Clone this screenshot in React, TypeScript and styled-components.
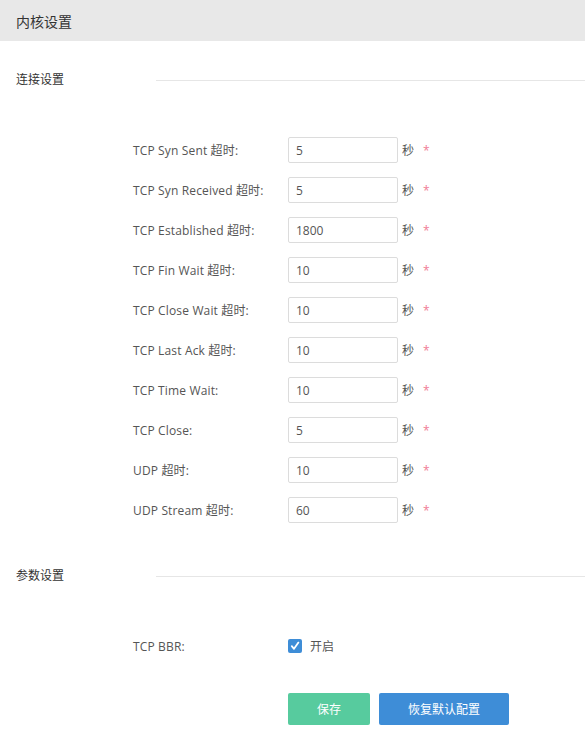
import React from "react";
import styled, { createGlobalStyle } from "styled-components";

const GlobalStyle = createGlobalStyle`
  html, body {
    margin: 0;
    padding: 0;
    background: #fff;
    font-family: "Open Sans", "Noto Sans CJK SC", sans-serif;
    color: #555;
  }
`;

const rows = [
  { label: "TCP Syn Sent 超时:", value: "5" },
  { label: "TCP Syn Received 超时:", value: "5" },
  { label: "TCP Established 超时:", value: "1800" },
  { label: "TCP Fin Wait 超时:", value: "10" },
  { label: "TCP Close Wait 超时:", value: "10" },
  { label: "TCP Last Ack 超时:", value: "10" },
  { label: "TCP Time Wait:", value: "10" },
  { label: "TCP Close:", value: "5" },
  { label: "UDP 超时:", value: "10" },
  { label: "UDP Stream 超时:", value: "60" },
];

const App = () => {
  return (
    <Page>
      <GlobalStyle />
      <Header>内核设置</Header>

      <SectionHead top={29}>
        <SectionTitle>连接设置</SectionTitle>
        <Rule />
      </SectionHead>
      <Form top={40}>
        {rows.map((r) => (
          <Row key={r.label}>
            <Label>{r.label}</Label>
            <Input defaultValue={r.value} />
            <Unit>秒</Unit>
            <Required>*</Required>
          </Row>
        ))}
      </Form>

      <SectionHead top={36}>
        <SectionTitle>参数设置</SectionTitle>
        <Rule />
      </SectionHead>
      <Form top={40}>
        <Row>
          <Label>TCP BBR:</Label>
          <Check>
            <Box>
              <svg width="10" height="10" viewBox="0 0 10 10">
                <path
                  d="M1.8 5.2 L4 7.8 L8.4 1.6"
                  fill="none"
                  stroke="#fff"
                  strokeWidth="1.8"
                  strokeLinecap="round"
                  strokeLinejoin="round"
                />
              </svg>
            </Box>
            <CheckText>开启</CheckText>
          </Check>
        </Row>
      </Form>

      <Actions>
        <Button tone="#57cb9e" width={82}>保存</Button>
        <Button tone="#3e8dd7" width={130}>恢复默认配置</Button>
      </Actions>
    </Page>
  );
};

export default App;

const Page = styled.div`
  width: 585px;
  min-height: 738px;
  background: #fff;
`;

const Header = styled.div`
  height: 41px;
  background: #e8e8e8;
  display: flex;
  align-items: center;
  padding-left: 16px;
  font-size: 14px;
  color: #333;
`;

const SectionHead = styled.div<{ top: number }>`
  display: flex;
  align-items: center;
  height: 20px;
  margin-top: ${(p) => p.top}px;
`;

const SectionTitle = styled.div`
  width: 140px;
  padding-left: 16px;
  font-size: 12px;
  color: #333;
  line-height: 20px;
`;

const Rule = styled.div`
  flex: 1;
  height: 1px;
  background: #e6e6e6;
`;

const Form = styled.div<{ top: number }>`
  display: flex;
  flex-direction: column;
  padding-left: 133px;
  margin-top: ${(p) => p.top}px;
`;

const Row = styled.div`
  display: flex;
  align-items: center;
  height: 40px;
`;

const Label = styled.div`
  width: 155px;
  font-size: 12px;
  letter-spacing: 0.15px;
  color: #555;
`;

const Input = styled.input`
  box-sizing: border-box;
  width: 110px;
  height: 26px;
  border: 1px solid #dcdcdc;
  border-radius: 2px;
  padding: 0 7px;
  font-family: "Open Sans", "Noto Sans CJK SC", sans-serif;
  font-size: 12px;
  color: #555;
  outline: none;
`;

const Unit = styled.span`
  margin-left: 4px;
  font-size: 12px;
  color: #555;
`;

const Required = styled.span`
  margin-left: 9px;
  font-size: 12px;
  color: #f07c95;
`;

const Check = styled.label`
  display: flex;
  align-items: center;
`;

const Box = styled.span`
  width: 14px;
  height: 14px;
  border-radius: 2px;
  background: #3e8dd7;
  display: flex;
  align-items: center;
  justify-content: center;
`;

const CheckText = styled.span`
  margin-left: 8px;
  font-size: 12px;
  color: #555;
`;

const Actions = styled.div`
  display: flex;
  gap: 9px;
  padding-left: 288px;
  margin-top: 27px;
`;

const Button = styled.button<{ tone: string; width: number }>`
  width: ${(p) => p.width}px;
  height: 32px;
  border: none;
  border-radius: 2px;
  background: ${(p) => p.tone};
  color: #fff;
  font-family: "Open Sans", "Noto Sans CJK SC", sans-serif;
  font-size: 12px;
  cursor: pointer;
`;
